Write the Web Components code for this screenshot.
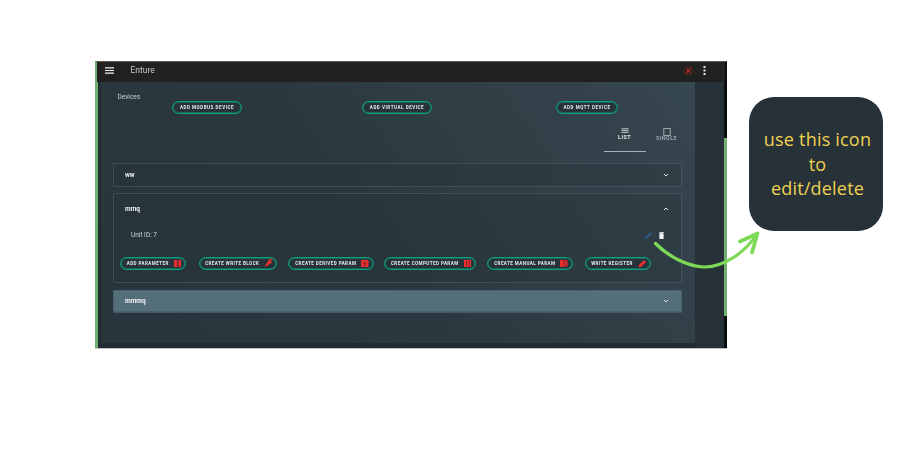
<!DOCTYPE html>
<html lang="en">
<head>
<meta charset="utf-8">
<title>Enture devices</title>
<style>
html,body{margin:0;padding:0;background:#fff;width:900px;height:450px;overflow:hidden}
body{font-family:Roboto,"Liberation Sans",sans-serif}
</style>
</head>
<body>
<template id="t-poster">
<style>
:host{display:flex;position:relative;width:900px;height:450px;padding:61px 0 0 95px;box-sizing:border-box;align-items:flex-start;background:#fff}
.callout{margin:36px 0 0 22px}
svg{position:absolute;left:0;top:0;width:900px;height:450px;pointer-events:none}
</style>
<slot name="screen"></slot>
<div class="callout"><slot name="callout"></slot></div>
<svg viewBox="0 0 900 450" fill="none" stroke="#7ed957" stroke-linecap="round" stroke-linejoin="round" stroke-width="3.200">
<path d="M655.500 243.500C668 256 687 266.500 704 267C722 267.500 744 254 757 234"/>
<path d="M740 241.500L757.500 233.500L752 252.500" stroke-width="3.800"/>
</svg>
</template>

<template id="t-callout">
<style>
:host{display:flex;align-items:center;justify-content:center;width:134px;height:134px;border-radius:25px;background:#263238;color:#f0d050;font:18px/24.5px "Open Sans","Liberation Sans",sans-serif;letter-spacing:.2px;text-align:center;box-sizing:border-box;padding:0 0 0 3px}
</style>
<div><slot></slot></div>
</template>

<template id="t-screen">
<style>
:host{display:flex;flex-direction:column;width:632px;height:287px;background:#263238;box-shadow:0 1px 0 #b8c0c4;color:#fff;filter:blur(.35px);flex:none}
.body{flex:1;display:flex;min-height:0}
.rail-l{width:2.500px;background:#6fb26f}
.col-l{width:3px;background:#222d33}
.main{flex:1;min-width:0;display:flex;flex-direction:column}
.foot{height:5px;background:#222c32}
.card{flex:1;min-height:0;background:linear-gradient(55deg,#29353c 0%,#2b383f 45%,#37474f 100%)}
.col-r{width:29px;background:#263238}
.rail-r{width:3.500px;display:flex;flex-direction:column;background:#0b0e10}
.rail-r i{display:block;margin-top:56px;height:178px;background:#6fb26f}
</style>
<slot name="bar"></slot>
<div class="body">
<div class="rail-l"></div><div class="col-l"></div>
<div class="main"><div class="card"><slot></slot></div><div class="foot"></div></div>
<div class="col-r"></div>
<div class="rail-r"><i></i></div>
</div>
</template>

<template id="t-appbar">
<style>
:host{display:flex;align-items:center;height:21px;background:#212121;border-top:1px solid #5c5c55;border-left:2.500px solid #6fb26f;border-right:2px solid #0b0e10;box-sizing:border-box;padding:0 19.500px 4px 7.500px;font:400 8.500px Roboto,sans-serif;color:#c9c9c9}
.burger{width:9px;height:7px;display:block;margin-right:17px}
.t{flex:1;letter-spacing:0}
.r{display:flex;align-items:center;gap:9px}
svg{display:block}
</style>
<svg class="burger" viewBox="0 0 9 7"><path d="M0 .8H9M0 3.500H9M0 6.200H9" stroke="#f2f2f2" stroke-width="1.200"/></svg>
<div class="t"><slot></slot></div>
<div class="r">
<svg width="11" height="11" viewBox="0 0 11 11" fill="none"><circle cx="5.500" cy="5.500" r="4.300" stroke="#7a2525" stroke-width="1" stroke-dasharray="1.500 .7"/><path d="M2.800 8.200L8.200 2.800M3.300 3.800L7.800 7.800" stroke="#c92a2a" stroke-width="1.100"/></svg>
<svg width="3" height="9" viewBox="0 0 3 9"><path d="M1.500 0V2M1.500 3.500V5.500M1.500 7V9" stroke="#e8e8e8" stroke-width="2"/></svg>
</div>
</template>

<template id="t-pill">
<style>
:host{display:inline-flex;align-items:center;justify-content:center;gap:var(--g,4px);height:13px;box-sizing:border-box;padding-left:var(--pl,0);border:1px solid #0da37f;box-shadow:inset 0 0 0 1px rgba(13,163,127,.45);border-radius:7px;background:#27323a;color:#e6eaec;font:700 4.500px Roboto,sans-serif;letter-spacing:var(--ls,.55px);text-transform:uppercase;white-space:nowrap;flex:none}
::slotted(svg){display:block;flex:none}
</style>
<slot></slot><slot name="icon"></slot>
</template>

<template id="t-tabs">
<style>
:host{display:flex;justify-content:flex-end;padding:0 7px 0 0;margin-top:11px}
</style>
<slot></slot>
</template>

<template id="t-tab">
<style>
:host{display:flex;flex-direction:column;align-items:center;width:42px;height:27px;box-sizing:border-box;padding-top:3px;font:700 5.400px/6px Roboto,sans-serif;letter-spacing:.45px;color:var(--c,#dfe4e6);text-transform:uppercase;border-bottom:1px solid var(--u,transparent)}
::slotted(svg){display:block;margin-bottom:-2px}
</style>
<slot name="icon"></slot><slot></slot>
</template>

<template id="t-acc">
<style>
:host{display:block;box-sizing:border-box;margin:0 13px 0 12.500px;border:1px solid rgba(120,145,158,.28);background:rgba(35,47,54,.28);border-radius:1px}
:host([hl]){background:#546e7a;border-color:#4a626e;box-shadow:0 1px 0 #45596a}
.h{display:flex;align-items:center;justify-content:space-between;padding:0 12px 0 11px;height:var(--h,22px);font:700 6.500px Roboto,sans-serif;color:#f1f3f4}
svg{display:block}
.b{display:block}
:host(:not([open])) .b{display:none}
</style>
<div class="h"><span><slot name="title"></slot></span>
<svg width="6" height="4" viewBox="0 0 6 4" fill="none"><path id="c" d="M1 1L3 3L5 1" stroke="#dfe4e6" stroke-width="1"/></svg></div>
<div class="b"><slot></slot></div>
</template>

<template id="t-devices">
<style>
:host{display:block;height:100%;box-sizing:border-box}
.top{display:grid;grid-template-columns:71.500px 190px 194px 1fr;height:32px;padding-top:10px;box-sizing:border-box}
.lab{padding-left:17px;font:400 6.500px/8px Roboto,sans-serif;color:#c8d0d4;white-space:nowrap;margin-top:1px}
.btn{padding-top:9px;margin-top:-7px}
</style>
<div class="top">
<div class="lab"><slot name="label"></slot></div>
<div class="btn"><slot name="a"></slot></div>
<div class="btn"><slot name="b"></slot></div>
<div class="btn"><slot name="c"></slot></div>
</div>
<slot></slot>
</template>

<template id="t-detail">
<style>
:host{display:block;padding:0 30px 0 6px;--ls:.45px;--g:5px;--pl:2px}
.row{display:flex;align-items:center;justify-content:space-between;height:18px;padding:0 3px 0 11px;font:400 6.500px Roboto,sans-serif;color:#cfd8dc;margin-top:3px;margin-right:-14px}
.ic{display:flex;align-items:center;gap:6px;margin-right:-2px}
.act{display:flex;margin-top:13px;height:13px;padding-bottom:13px}
svg{display:block}
</style>
<div class="row"><span><slot name="unit"></slot></span><div class="ic"><slot name="icons"></slot></div></div>
<div class="act"><slot></slot></div>
</template>

<x-poster>
<x-screen slot="screen">
<x-appbar slot="bar">Enture</x-appbar>
<x-devices>
<span slot="label">Devices</span>
<x-pill slot="a" style="width:70px">Add Modbus Device</x-pill>
<x-pill slot="b" style="width:70px">Add Virtual Device</x-pill>
<x-pill slot="c" style="width:62px">Add MQTT Device</x-pill>

<x-tabs>
<x-tab style="--u:#aab4b9">
<svg slot="icon" width="8" height="8" viewBox="0 0 8 8"><path d="M.5 .8H7.500M.5 2.600H7.500M.5 4.400H7.500" stroke="#e6eaec" stroke-width=".8"/></svg>
List</x-tab>
<x-tab style="--c:#9aa7ad">
<svg slot="icon" width="8" height="9" viewBox="0 0 8 9" fill="none"><rect x=".8" y=".5" width="6.400" height="7" stroke="#a9b3b8" stroke-width=".9"/></svg>
Single</x-tab>
</x-tabs>

<x-acc style="margin-top:11px;--h:22px"><span slot="title">ww</span></x-acc>

<x-acc open style="margin-top:6px;height:90px;--h:29px">
<span slot="title">mmq</span>
<x-detail>
<span slot="unit">Unit ID: 7</span>
<svg slot="icons" width="9" height="9" viewBox="0 0 8 8"><path d="M.8 7.200L1.300 5.300L5.600 1L7 2.400L2.700 6.700Z" fill="#2b5f8a"/></svg>
<svg slot="icons" width="5" height="7" viewBox="0 0 5 7"><path d="M.4 1.200H4.600V7H.4Z" fill="#f2f4f5"/><path d="M.2 .5H4.800" stroke="#f2f4f5" stroke-width=".8"/></svg>

<x-pill style="width:66px">Add Parameter
<svg slot="icon" width="7.500" height="7.500" viewBox="0 0 7 7"><rect width="7" height="7" fill="#e92f2f"/><path d="M3.500 0V7" stroke="#4a2228" stroke-width=".9"/><path d="M1 2H2.500M4.500 2H6M1 5H2.500M4.500 5H6" stroke="#a52a2a" stroke-width=".6"/></svg></x-pill>
<x-pill style="width:78px;margin-left:13px">Create Write Block
<svg slot="icon" width="8.500" height="8.500" viewBox="0 0 8 8"><path d="M.3 7.700L2.800 3.500L5 1.200L6.900 3L4.500 5.400Z" fill="#e92f2f"/><path d="M4.200 .8L7.300 3.900M5.500 .5L7.700 .5" stroke="#e92f2f" stroke-width="1.300"/></svg></x-pill>
<x-pill style="width:86px;margin-left:11px">Create Derived Param
<svg slot="icon" width="7.500" height="7.500" viewBox="0 0 7 7"><rect width="7" height="7" fill="#e92f2f"/><path d="M3.500 1.500V5.500" stroke="#4a2228" stroke-width=".9"/><path d="M1.500 3.500H5.500" stroke="#a52a2a" stroke-width=".7"/></svg></x-pill>
<x-pill style="width:92px;margin-left:10px">Create Computed Param
<svg slot="icon" width="7.500" height="7.500" viewBox="0 0 7 7"><rect width="7" height="7" fill="#e92f2f"/><path d="M2.300 1V6M4.700 1V6" stroke="#6a2228" stroke-width=".8"/></svg></x-pill>
<x-pill style="width:86px;margin-left:11px">Create Manual Param
<svg slot="icon" width="7.500" height="7.500" viewBox="0 0 7 7"><rect width="7" height="7" fill="#e92f2f"/><path d="M2.500 1.200H7M2.500 3.500H5M2.500 5.800H7" stroke="#6a2228" stroke-width=".8"/></svg></x-pill>
<x-pill style="width:66px;margin-left:12px">Write Register
<svg slot="icon" width="9" height="9" viewBox="0 0 8 8"><path d="M.4 7.600L.9 5.400L5.400 .9L7.100 2.600L2.600 7.100Z" fill="#e92f2f"/></svg></x-pill>
</x-detail>
</x-acc>

<x-acc hl style="margin-top:7px;--h:20px"><span slot="title">mmmq</span></x-acc>
</x-devices>
</x-screen>
<x-callout slot="callout">use this icon<br>to<br>edit/delete</x-callout>
</x-poster>

<script>
function def(name, tpl, after){
  customElements.define(name, class extends HTMLElement{
    constructor(){
      super();
      const r=this.attachShadow({mode:'open'});
      r.appendChild(document.getElementById(tpl).content.cloneNode(true));
    }
    connectedCallback(){ if(after) after(this); }
  });
}
def('x-poster','t-poster');
def('x-callout','t-callout');
def('x-screen','t-screen');
def('x-appbar','t-appbar');
def('x-pill','t-pill');
def('x-tabs','t-tabs');
def('x-tab','t-tab');
def('x-devices','t-devices');
def('x-detail','t-detail');
def('x-acc','t-acc',el=>{
  if(el.hasAttribute('open')) el.shadowRoot.getElementById('c').setAttribute('d','M1 3L3 1L5 3');
});
</script>
</body>
</html>
